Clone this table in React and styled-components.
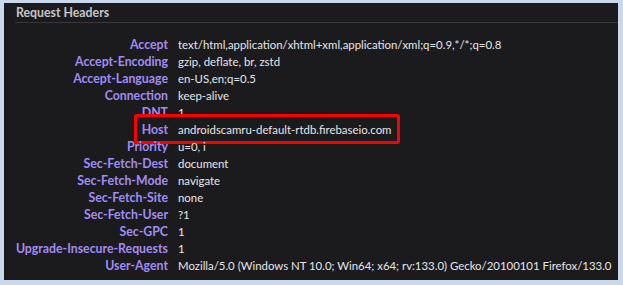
import React from "react"
import styled, { createGlobalStyle } from "styled-components"

const Global = createGlobalStyle`
  html, body {
    margin: 0;
    padding: 0;
    background: #c9d8ec;
  }
`

const Frame = styled.div`
  width: 623px;
  height: 285px;
  box-sizing: border-box;
  padding: 3px 5px 5px 4px;
  background: #c9d8ec;
`

const Panel = styled.section`
  height: 100%;
  background: #1b1b1e;
  font-family: Lato, "Noto Sans", sans-serif;
  font-size: 12.3px;
  overflow: hidden;
`

const Title = styled.div`
  margin: 0 0 0 11px;
  padding: 3px 0 2px 1px;
  border-bottom: 1px solid #38383c;
  color: #c5c5cc;
  font-weight: 700;
  line-height: 14px;
`

const List = styled.div`
  padding-top: 13px;
`

const Row = styled.div`
  position: relative;
  display: flex;
  align-items: center;
  height: 17px;
  gap: 10px;
  white-space: nowrap;
`

const Name = styled.span`
  flex: 0 0 164px;
  text-align: right;
  color: #a28cf3;
  font-weight: 700;
`

const Value = styled.span`
  color: #e6e6ea;
  font-size: 11.4px;
`

const Mark = styled.span`
  position: absolute;
  left: ${p => p.$left}px;
  width: ${p => p.$width}px;
  top: -7px;
  bottom: -6px;
  border: 3px solid #ff0000;
  border-radius: 3px;
  box-sizing: border-box;
  pointer-events: none;
`

const headers = [
  ["Accept", "text/html,application/xhtml+xml,application/xml;q=0.9,*/*;q=0.8"],
  ["Accept-Encoding", "gzip, deflate, br, zstd"],
  ["Accept-Language", "en-US,en;q=0.5"],
  ["Connection", "keep-alive"],
  ["DNT", "1"],
  ["Host", "androidscamru-default-rtdb.firebaseio.com", true],
  ["Priority", "u=0, i"],
  ["Sec-Fetch-Dest", "document"],
  ["Sec-Fetch-Mode", "navigate"],
  ["Sec-Fetch-Site", "none"],
  ["Sec-Fetch-User", "?1"],
  ["Sec-GPC", "1"],
  ["Upgrade-Insecure-Requests", "1"],
  ["User-Agent", "Mozilla/5.0 (Windows NT 10.0; Win64; x64; rv:133.0) Gecko/20100101 Firefox/133.0"],
]

const App = () => (
  <Frame>
    <Global />
    <Panel>
      <Title>Request Headers</Title>
      <List>
        {headers.map(([name, value, marked]) => (
          <Row key={name}>
            <Name>{name}</Name>
            <Value>{value}</Value>
            {marked && <Mark $left={130} $width={266} />}
          </Row>
        ))}
      </List>
    </Panel>
  </Frame>
)

export default App
